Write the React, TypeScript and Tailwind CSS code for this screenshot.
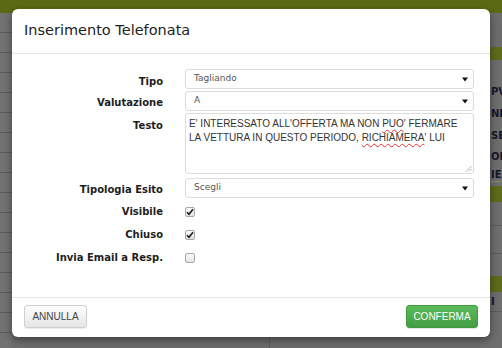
import { ReactNode } from "react";

const leftRows = Array.from({ length: 17 });

function Arrow() {
  return (
    <svg width="6" height="5" viewBox="0 0 6 5" className="shrink-0">
      <path d="M0 0.5 L6 0.5 L3 4.5 Z" fill="#111" />
    </svg>
  );
}

function Select({ value }: { value: string }) {
  return (
    <div className="h-[20px] w-[289px] flex items-center justify-between pl-[8px] pr-[5px] border border-[#dcdcdc] rounded-[3px] bg-white text-[9px] text-[#555]">
      <span>{value}</span>
      <Arrow />
    </div>
  );
}

function Checkbox({ checked }: { checked?: boolean }) {
  return (
    <div className="w-[10px] h-[10px] rounded-[2px] border border-[#a9a9a9] bg-gradient-to-b from-[#fbfbfb] to-[#e3e3e3] flex items-center justify-center">
      {checked && (
        <svg width="8" height="8" viewBox="0 0 8 8">
          <path d="M1 4.2 L3 6.3 L7 1.3" stroke="#1c1c1c" strokeWidth="1.6" fill="none" />
        </svg>
      )}
    </div>
  );
}

function Row({ label, children, pt = "pt-[6px]" }: { label: string; children: ReactNode; pt?: string }) {
  return (
    <div className="flex items-start">
      <div className={`w-[151px] text-right font-bold text-[10px] leading-[13px] text-[#1e1e1e] ${pt}`}>{label}</div>
      <div className="ml-[22px]">{children}</div>
    </div>
  );
}

function CheckRow({ label, checked }: { label: string; checked?: boolean }) {
  return (
    <div className="flex items-center h-[23px]">
      <div className="w-[151px] text-right font-bold text-[10px] leading-[13px] text-[#1e1e1e]">{label}</div>
      <div className="ml-[22px]">
        <Checkbox checked={checked} />
      </div>
    </div>
  );
}

export default function App() {
  return (
    <div
      className="relative w-[502px] h-[348px] overflow-hidden bg-[#6e6e6e]"
      style={{ fontFamily: '"DejaVu Sans", Verdana, sans-serif' }}
    >
      {/* page behind the overlay */}
      <div className="h-[13px] bg-[#5b6a12]" />
      <div className="flex h-[335px]">
        <div className="w-[12px] flex flex-col">
          {leftRows.map((_, i) => (
            <div key={i} className="h-[20px] shrink-0 bg-[#727272] border-b border-[#5c5c5c]" />
          ))}
        </div>
        <div className="flex-1 flex justify-end">
          <div className="w-[221px] border-l border-[#5d6a20] mt-[324px]" />
        </div>
        <div className="w-[12px] flex flex-col text-[10px] font-bold text-[#15152a] whitespace-nowrap overflow-hidden">
          <div className="h-[34px] bg-[#6c6c6c]" />
          <div className="h-[13px] bg-[#5e6b1c]" />
          <div className="h-[21px] bg-[#6e6e6e]" />
          <div className="h-[22px] pl-[1px] leading-[22px]">PV</div>
          <div className="h-[22px] pl-[1px] leading-[22px]">NE</div>
          <div className="h-[22px] pl-[1px] leading-[22px]">SE</div>
          <div className="h-[20px] pl-[1px] leading-[20px]">ON</div>
          <div className="h-[15px] pl-[1px] leading-[15px] border-b border-[#8a8a6a]">IE</div>
          <div className="h-[4px]" />
          <div className="h-[16px] bg-[#5e6b1c]" />
          <div className="h-[24px] border-b border-[#5c5c5c]" />
          <div className="h-[28px] border-b border-[#5c5c5c]" />
          <div className="h-[22px]" />
          <div className="h-[16px] bg-[#5e6b1c]" />
          <div className="h-[20px] pl-[1px] leading-[20px] border-b border-[#5c5c5c]">I</div>
        </div>
      </div>

      {/* modal */}
      <div className="absolute left-[12px] top-[9px] w-[478px] h-[328px] bg-white rounded-[6px] shadow-[0_3px_9px_rgba(0,0,0,0.45)] flex flex-col">
        <div className="h-[45px] border-b border-[#e5e5e5] px-[12px] flex items-center">
          <h4 className="text-[14.5px] text-[#222]">Inserimento Telefonata</h4>
        </div>

        <div className="h-[243px] pt-[15px] flex flex-col">
          <Row label="Tipo">
            <Select value="Tagliando" />
          </Row>
          <div className="mt-[2px]">
            <Row label="Valutazione" pt="pt-[5px]">
              <Select value="A" />
            </Row>
          </div>
          <div className="mt-[2px]">
            <Row label="Testo">
              <div
                className="relative h-[61px] w-[289px] border border-[#dcdcdc] rounded-[3px] pl-[3px] pr-[8px] pt-[3px] text-[10px] leading-[14px] text-[#333]"
                style={{ fontFamily: '"Liberation Sans", Arial, sans-serif' }}
              >
                E' INTERESSATO ALL'OFFERTA MA NON{" "}
                <span className="underline decoration-wavy decoration-[#e03030] decoration-1 underline-offset-2">PUO</span>' FERMARE LA
                VETTURA IN QUESTO PERIODO,{" "}
                <span className="underline decoration-wavy decoration-[#e03030] decoration-1 underline-offset-2">RICHIAMERA</span>' LUI
                <svg width="7" height="7" viewBox="0 0 7 7" className="absolute right-[1px] bottom-[1px]">
                  <path d="M6.5 1 L1 6.5 M6.5 4 L4 6.5" stroke="#999" strokeWidth="0.8" />
                </svg>
              </div>
            </Row>
          </div>
          <div className="mt-[4px]">
            <Row label="Tipologia Esito" pt="pt-[5px]">
              <Select value="Scegli" />
            </Row>
          </div>
          <div className="mt-[2px]">
            <CheckRow label="Visibile" checked />
            <CheckRow label="Chiuso" checked />
            <CheckRow label="Invia Email a Resp." />
          </div>
        </div>

        <div
          className="flex-1 border-t border-[#e5e5e5] px-[12px] pt-[7px] flex justify-between items-start text-[10px]"
          style={{ fontFamily: '"Liberation Sans", Arial, sans-serif' }}
        >
          <button className="h-[23px] w-[63px] rounded-[3px] border border-[#cfcfcf] bg-gradient-to-b from-[#fdfdfd] to-[#e6e6e6] text-[#444] shadow-[0_1px_1px_rgba(0,0,0,0.08)]">
            ANNULLA
          </button>
          <button className="h-[23px] w-[72px] rounded-[3px] border border-[#3f9a3f] bg-gradient-to-b from-[#5bbb5b] to-[#449d44] text-white shadow-[0_1px_1px_rgba(0,0,0,0.1)]">
            CONFERMA
          </button>
        </div>
      </div>
    </div>
  );
}
